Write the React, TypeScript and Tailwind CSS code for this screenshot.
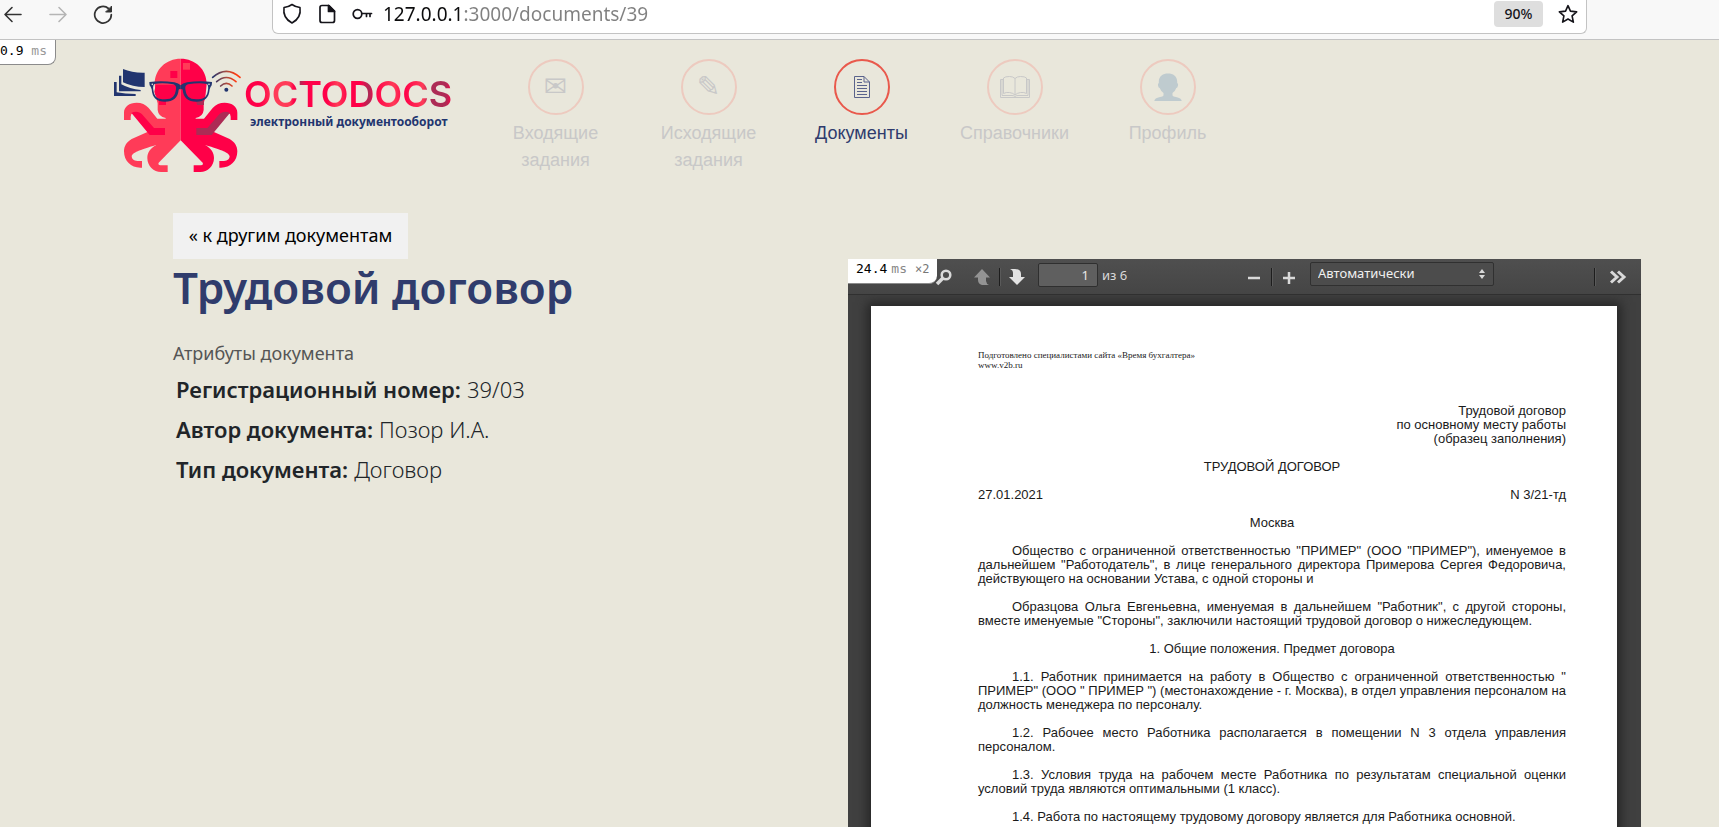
import React from "react";

const sans = "font-['Noto_Sans',sans-serif]";

function Octopus() {
  return (
    <svg viewBox="27 24 384 345" className="h-[115px] w-32 shrink-0" aria-hidden="true">
      <defs>
        <linearGradient id="wave" gradientUnits="userSpaceOnUse" x1="322" y1="0" x2="406" y2="0">
          <stop offset="0" stopColor="#22356f" />
          <stop offset="0.5" stopColor="#a84a40" />
          <stop offset="0.85" stopColor="#ff3a10" />
        </linearGradient>
        <path
          id="half"
          d="M227 26C183 26 149 58 149 102L152 132Q154 150 158 160V180Q160 200 182 204V206H157L131 174C121 163 110 158 95 158C73 158 57 170 57 188V210H77V200Q77 191 84 189L134 243L80 267C65 276 57 288 57 304C57 333 78 353 106 353H111V333H97Q80 332 80 318C84 308 100 301 154 285C135 295 127 308 127 324C127 348 146 366 168 366H188V346H166Q158 344 161 338L227 271Z"
        />
        <path id="arm" d="M80 188C94 183 104 186 111 193L147 234H180V255H134L80 190Z" />
        <path
          id="lens"
          fillRule="evenodd"
          d="M133 96Q170 91 208 97Q221 100 227 106V118Q223 116 221 119C219 143 205 155 180 155C155 155 142 145 140 118L137 110Q133 108 133 96ZM148 102Q142 108 146 125C149 142 160 148 180 148C203 148 210 138 213 118Q215 106 205 103Q172 97 148 102Z"
        />
      </defs>
      <use href="#half" fill="#ff3b58" />
      <use href="#arm" fill="#ff0048" />
      <g transform="matrix(-1 0 0 1 454 0)">
        <use href="#half" fill="#ff0048" />
        <use href="#arm" fill="#ad2b55" />
      </g>
      <path fill="#ff0048" d="M196 63h21v21h-21zM162 152h21v13h-21z" />
      <path fill="#ff3b58" d="M234 39h21v20h-21z" />
      <path fill="#ad2b55" d="M273 152h24v13h-20z" />
      <path fill="#ff0048" d="M152 104h63v20q-8 26-36 25q-28 0-31-24z" />
      <g fill="#22356f">
        <use href="#lens" />
        <use href="#lens" transform="matrix(-1 0 0 1 454 0)" />
        <circle cx="364" cy="119" r="6" />
        <path d="M54 57Q82 69 119 68V111Q82 111 54 97Z" />
        <path d="M42 77h7v26q25 14 58 17v4H42Z" />
        <path d="M27 96h8v31q25 5 57 5v6H27Z" />
      </g>
      <path
        fill="none"
        stroke="url(#wave)"
        strokeWidth="5"
        strokeLinecap="round"
        d="M347 108Q364 92 381 108M335 95Q364 70 393 95M323 82Q364 46 405 82"
      />
      <circle cx="142" cy="103" r="2.5" fill="#e9e7db" />
      <circle cx="312" cy="103" r="2.5" fill="#e9e7db" />
    </svg>
  );
}

const DocIcon = (
  <svg viewBox="0 0 16 22" className="h-[22px] w-4 text-[#5a638c]" fill="none" stroke="currentColor" aria-hidden="true">
    <path d="M.5.5H10L15.500 6V21.500H.5ZM10 .5V6H15.500M3 3.500H8M3 6.500H8M3 9.500H13M3 12.500H13M3 15.500H13M3 18.500H13" />
  </svg>
);

const BookIcon = (
  <svg viewBox="0 0 30 22" className="h-[22px] w-[30px]" fill="none" stroke="currentColor" aria-hidden="true">
    <path d="M15 2.500Q13 .5 9.500.5Q5 .5 3.500 2V17.500Q6 16 9.500 16.500Q13 17 15 19Q17 17 20.500 16.500Q24 16 26.500 17.500V2Q25 .5 20.500.5Q17 .5 15 2.500ZM15 2.500V19M3 3.500H.5V21.500H29.500V3.500H27M2 4V19.500H12Q14 19.500 15 20.500Q16 19.500 18 19.500H28V4" />
  </svg>
);

const PersonIcon = (
  <svg viewBox="0 0 28 28" className="h-7 w-7" fill="#bfcbcf" aria-hidden="true">
    <path d="M14 .5C19 .5 23 3 23.200 8.500V10Q24.500 10.500 24 12.500Q23.500 15 22.300 15Q21 18.500 18.500 20V22.500Q19 23.500 22 24Q27.500 25 27.700 28H.3Q.5 25 6 24Q9 23.500 9.500 22.500V20Q7 18.500 5.700 15Q4.500 15 4 12.500Q3.600 10.500 4.800 10V8.500C5 3 9 .5 14 .5Z" />
  </svg>
);

const Glyph = ({ children }: { children: string }) => (
  <span className="font-['DejaVu_Sans',sans-serif] text-[28px] leading-none">{children}</span>
);

const menu = [
  { label: "Входящие задания", icon: <Glyph>✉</Glyph> },
  { label: "Исходящие задания", icon: <Glyph>✎</Glyph> },
  { label: "Документы", icon: DocIcon, active: true },
  { label: "Справочники", icon: BookIcon },
  { label: "Профиль", icon: PersonIcon },
];

function BrowserBar() {
  return (
    <div className="flex h-10 shrink-0 items-start border-b border-[#c3c3c3] bg-[#f8f8f8] text-[#15141a]">
      <div className="flex w-[272px] shrink-0 items-center gap-[25px] pt-1 pl-[3px]">
        <button aria-label="Назад" className="text-[#333]">
          <svg viewBox="0 0 20 20" className="size-5" fill="none" stroke="currentColor" strokeWidth="1.600" strokeLinecap="round" strokeLinejoin="round">
            <path d="M18 10.500H2M9 3.500L2 10.500L9 17.500" />
          </svg>
        </button>
        <button aria-label="Вперёд" className="text-[#b5b5b5]">
          <svg viewBox="0 0 20 20" className="size-5" fill="none" stroke="currentColor" strokeWidth="1.600" strokeLinecap="round" strokeLinejoin="round">
            <path d="M2 10.500H18M11 3.500L18 10.500L11 17.500" />
          </svg>
        </button>
        <button aria-label="Обновить" className="text-[#333]">
          <svg viewBox="0 0 20 20" className="size-5" fill="none" stroke="currentColor" strokeWidth="1.700" strokeLinecap="round">
            <path d="M18.300 10.500A8.300 8.300 0 1 1 15.500 4.500" />
            <path d="M18.500 2.500V8H13Z" fill="currentColor" strokeWidth="1" strokeLinejoin="round" />
          </svg>
        </button>
      </div>
      <div className="mr-[132px] flex h-[34px] flex-1 items-center rounded-b-md border border-t-0 border-[#c3c3c3] bg-white px-2 pb-[5px]">
        <svg viewBox="0 0 22 22" className="size-[22px]" fill="none" stroke="currentColor" strokeWidth="1.600" strokeLinejoin="round" aria-hidden="true">
          <path d="M11 1.500Q14.500 4 19 4.500Q20.500 15 11 20Q1.500 15 3 4.500Q7.500 4 11 1.500Z" />
        </svg>
        <svg viewBox="0 0 22 22" className="ml-[13px] size-[22px]" fill="none" stroke="currentColor" strokeWidth="1.700" strokeLinejoin="round" aria-hidden="true">
          <path d="M6 2.500H13L18.500 8V17.500Q18.500 19.500 16.500 19.500H6Q4 19.500 4 17.500V4.500Q4 2.500 6 2.500Z" />
          <path d="M12.500 2.500V8.500H18.500Z" fill="currentColor" />
        </svg>
        <svg viewBox="0 0 22 22" className="ml-[13px] size-[22px]" fill="none" stroke="currentColor" strokeWidth="1.700" strokeLinecap="round" aria-hidden="true">
          <circle cx="6.500" cy="11" r="4.300" />
          <path d="M11 10.500H20.500M15.500 10.500V13.500M19 10.500V13.500" />
        </svg>
        <input
          aria-label="Адрес"
          defaultValue="127.0.0.1:3000/documents/39"
          className={`${sans} ml-2.5 min-w-0 flex-1 bg-[linear-gradient(90deg,#0c0c0d_82px,#808080_82px)] bg-clip-text text-[19px] leading-7 text-transparent outline-none`}
        />
        <button className={`${sans} mr-[15px] h-[26px] w-[49px] rounded bg-[#dedede] text-sm font-medium`}>90%</button>
        <button aria-label="Добавить в закладки">
          <svg viewBox="0 0 22 22" className="size-5" fill="none" stroke="currentColor" strokeWidth="1.800" strokeLinejoin="round">
            <path d="M11 1.800L13.700 7.800L20.500 8.600L15.500 13.100L16.900 19.900L11 16.500L5.100 19.900L6.500 13.100L1.500 8.600L8.300 7.800Z" />
          </svg>
        </button>
      </div>
    </div>
  );
}

function Header() {
  return (
    <header className="flex h-[173px] shrink-0 items-start pt-[18px] pl-[114px]">
      <a href="#home" className="flex w-[365px] shrink-0" aria-label="Octodocs">
        <Octopus />
        <span className="ml-0.5 pt-5">
          <span className="block bg-[linear-gradient(90deg,#ff0048_8%,#ff3b58_14%,#ff3b58_22%,#ff0048_24%,#ad2b55_27%,#ff0048_30%,#ff0048_40%,#ff3b58_45%,#ff0048_50%,#ff0048_56%,#ad2b55_60%,#ff0048_63%,#ff3b58_72%,#ff0048_77%,#ff3b58_86%,#ad2b55_89%,#ad2b55_97%,#ff0048)] bg-clip-text font-[Inter,sans-serif] text-[36px] leading-8 font-semibold text-transparent">
            OCTODOCS
          </span>
          <span className={`${sans} block pl-1.5 text-xs leading-6 font-bold text-[#22356f]`}>
            электронный документооборот
          </span>
        </span>
      </a>
      <nav className="flex pt-px">
        {menu.map((m) => (
          <a
            key={m.label}
            href="#menu"
            className={`flex w-[153px] flex-col items-center px-6 text-center font-['Liberation_Sans',sans-serif] text-lg leading-[27px] ${m.active ? "text-[#2f3b6d]" : "text-[#c8c8c8]"}`}
          >
            <span
              className={`mb-[5px] flex size-14 items-center justify-center rounded-full border-2 ${m.active ? "border-[#e9594c]" : "border-[#edcabf]"}`}
            >
              {m.icon}
            </span>
            {m.label}
          </a>
        ))}
      </nav>
    </header>
  );
}

const attributes = [
  ["Регистрационный номер:", "39/03"],
  ["Автор документа:", "Позор И.А."],
  ["Тип документа:", "Договор"],
];

function Separator() {
  return <span className="h-[18px] w-px bg-[#1d1d1d] shadow-[1px_0_0_#5a5a5a]" />;
}

function PdfToolbar() {
  return (
    <div className={`${sans} flex h-9 shrink-0 items-center border-b border-[#303030] bg-linear-to-b from-[#4f4f4f] to-[#454545] pr-3.5 pl-[87px] text-[13px] text-[#d9d9d9]`}>
      <button aria-label="Найти">
        <svg viewBox="0 0 18 18" className="size-[18px]" fill="none" stroke="currentColor" strokeWidth="2.500">
          <circle cx="11" cy="7" r="4.300" />
          <path d="M8 10L2 16" strokeWidth="3.500" />
        </svg>
      </button>
      <button aria-label="Предыдущая страница" className="ml-5">
        <svg viewBox="0 0 18 18" className="size-[18px]" fill="#939393">
          <path d="M9 1L17 9.500H13V13Q13.500 16 16 17H9Q5 16 5 12V9.500H1Z" />
        </svg>
      </button>
      <span className="ml-2 flex"><Separator /></span>
      <button aria-label="Следующая страница" className="ml-2">
        <svg viewBox="0 0 18 18" className="size-[18px]" fill="#e3e3e3">
          <path d="M9 17L17 9H13V6Q13 1 7 1H2Q5 2 5 5V9H1Z" />
        </svg>
      </button>
      <input
        aria-label="Страница"
        defaultValue="1"
        className="mt-1 ml-3 h-6 w-[60px] self-start rounded-xs border border-[#2f2f2f] bg-[#5f5f5f] px-2 text-right text-[#e8e8e8]"
      />
      <span className="mt-1 ml-1 self-start leading-6">из 6</span>
      <span className="flex-1" />
      <button aria-label="Уменьшить">
        <svg viewBox="0 0 14 14" className="size-3.5" stroke="currentColor" strokeWidth="2.500"><path d="M1 8H13" /></svg>
      </button>
      <span className="mx-2.5 flex"><Separator /></span>
      <button aria-label="Увеличить">
        <svg viewBox="0 0 14 14" className="size-3.5" stroke="currentColor" strokeWidth="2.500"><path d="M1 8H13M7 2V14" /></svg>
      </button>
      <span className="relative mt-[3px] ml-3.5 flex self-start">
        <select
          aria-label="Масштаб"
          className="h-6 w-[184px] appearance-none rounded-xs border border-[#303030] bg-[#4c4c4c] px-[7px] text-[13px] text-[#f0f0f0]"
        >
          <option>Автоматически</option>
        </select>
        <svg viewBox="0 0 8 10" className="pointer-events-none absolute top-[7px] right-2 h-2.5 w-2" fill="currentColor" aria-hidden="true">
          <path d="M4 0L7 4H1ZM4 10L1 6H7Z" />
        </svg>
      </span>
      <span className="ml-[100px] flex"><Separator /></span>
      <button aria-label="Инструменты" className="ml-3.5">
        <svg viewBox="0 0 18 14" className="h-3.5 w-[18px]" fill="none" stroke="currentColor" strokeWidth="3">
          <path d="M2 1.500L8 7L2 12.500M9 1.500L15 7L9 12.500" />
        </svg>
      </button>
    </div>
  );
}

const clause = "mt-3.5 indent-[34px]";

function PdfPage() {
  return (
    <article className="mr-6 ml-[23px] min-h-[1056px] bg-white pt-11 pr-[51px] pl-[107px] text-justify font-['Liberation_Sans',sans-serif] text-[13px] leading-[14px] text-[#1a1a1a] shadow-[0_0_10px_4px_#262626]">
      <p className="font-['Liberation_Serif',serif] text-[9px] leading-[10px]">
        Подготовлено специалистами сайта «Время бухгалтера»
        <br />
        www.v2b.ru
      </p>
      <p className="mt-[34px] text-right">
        Трудовой договор
        <br />
        по основному месту работы
        <br />
        (образец заполнения)
      </p>
      <h2 className="mt-3.5 text-center">ТРУДОВОЙ ДОГОВОР</h2>
      <p className="mt-3.5 flex justify-between">
        <span>27.01.2021</span>
        <span>N 3/21-тд</span>
      </p>
      <p className="mt-3.5 text-center">Москва</p>
      <p className={clause}>
        Общество с ограниченной ответственностью "ПРИМЕР" (ООО "ПРИМЕР"), именуемое в дальнейшем "Работодатель", в лице
        генерального директора Примерова Сергея Федоровича, действующего на основании Устава, с одной стороны и
      </p>
      <p className={clause}>
        Образцова Ольга Евгеньевна, именуемая в дальнейшем "Работник", с другой стороны, вместе именуемые "Стороны",
        заключили настоящий трудовой договор о нижеследующем.
      </p>
      <h3 className="mt-3.5 text-center">1. Общие положения. Предмет договора</h3>
      <p className={clause}>
        1.1. Работник принимается на работу в Общество с ограниченной ответственностью " ПРИМЕР" (ООО " ПРИМЕР ")
        (местонахождение - г. Москва), в отдел управления персоналом на должность менеджера по персоналу.
      </p>
      <p className={clause}>1.2. Рабочее место Работника располагается в помещении N 3 отдела управления персоналом.</p>
      <p className={clause}>
        1.3. Условия труда на рабочем месте Работника по результатам специальной оценки условий труда являются
        оптимальными (1 класс).
      </p>
      <p className={clause}>1.4. Работа по настоящему трудовому договору является для Работника основной.</p>
    </article>
  );
}

export default function App() {
  return (
    <div className="relative flex h-screen flex-col overflow-hidden bg-[#e9e7db]">
      <BrowserBar />
      <div className="absolute top-10 left-0 h-[25px] rounded-br-lg border-r border-b border-[#8b8b8b] bg-white pr-2 font-['DejaVu_Sans_Mono',monospace] text-[13px] leading-[22px] text-black">
        0.9 <span className="text-[#999]">ms</span>
      </div>
      <Header />
      <main className="grid min-h-0 flex-1 grid-cols-[675fr_793fr] pr-[78px] pl-[173px]">
        <section className={sans}>
          <a href="#documents" className="flex h-[46px] w-[235px] items-center justify-center bg-[#f1f1f1] pb-0.5 text-lg text-black">
            « к другим документам
          </a>
          <h1 className="mt-0.5 text-[44px] leading-[52px] font-semibold text-[#303c6c]">Трудовой договор</h1>
          <p className="mt-7 text-lg leading-6 text-[#555]">Атрибуты документа</p>
          <dl className="mt-1 pl-[3px] text-[22px] leading-10 text-[#212529]">
            {attributes.map(([name, value]) => (
              <div key={name} className="flex gap-1.5">
                <dt className="font-semibold">{name}</dt>
                <dd className="font-light">{value}</dd>
              </div>
            ))}
          </dl>
        </section>
        <section className="relative mt-[46px] flex flex-col overflow-hidden bg-[#404040]">
          <PdfToolbar />
          <div className="flex-1 overflow-hidden pt-[11px]">
            <PdfPage />
          </div>
          <div className="absolute top-0 left-0 h-[25px] rounded-br-lg border-b border-[#8b8b8b] bg-white px-2 font-['DejaVu_Sans_Mono',monospace] text-[13px] leading-5 text-black">
            24.4<span className="ml-1 text-[#888]">ms</span>
            <span className="ml-2 text-xs text-[#777]">×2</span>
          </div>
        </section>
      </main>
    </div>
  );
}
